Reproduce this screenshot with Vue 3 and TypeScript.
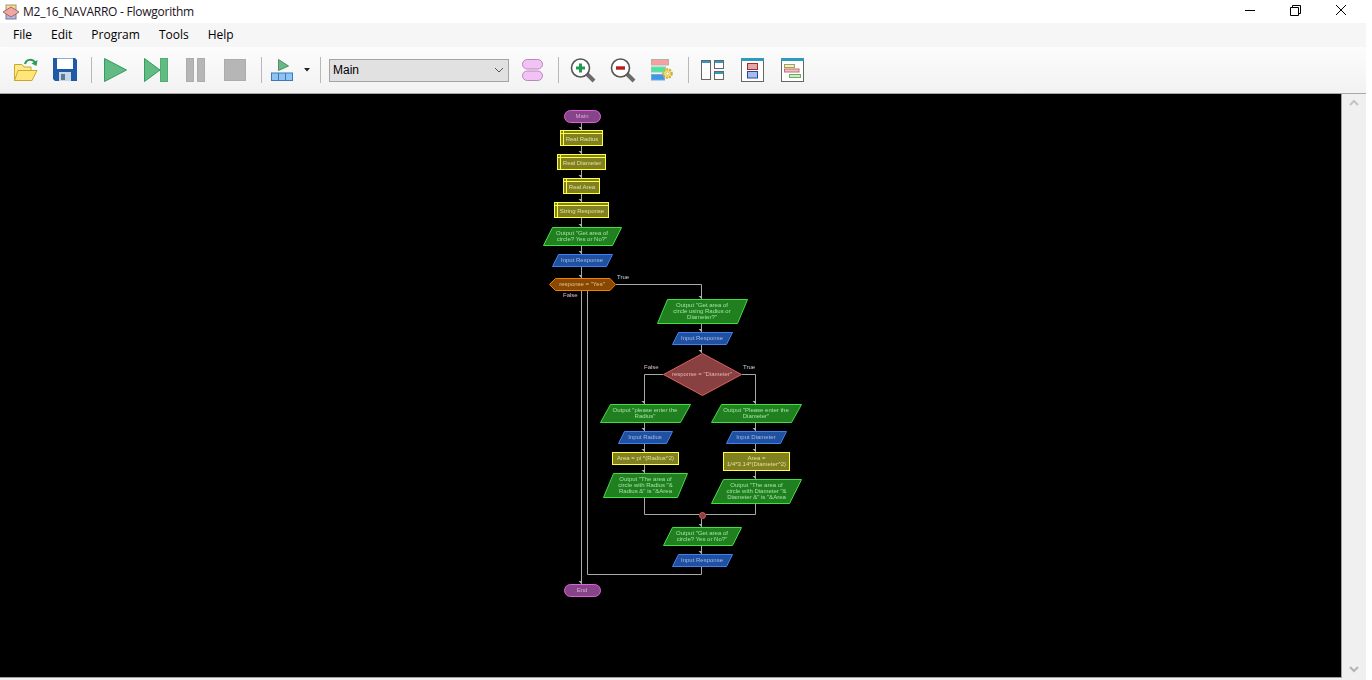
<script setup lang="ts">
type Kind = 'terminal' | 'declare' | 'output' | 'input' | 'decision' | 'diamond' | 'process'

interface FlowNode {
  kind: Kind
  points?: string
  box?: [number, number, number, number]
  inset?: boolean
  cx: number
  cy: number
  lines: string[]
}

// parallelogram from left, right, top, bottom and slant
function lean(l: number, r: number, t: number, b: number, s: number): string {
  return `${l},${b} ${l + s},${t} ${r},${t} ${r - s},${b}`
}

const nodes: FlowNode[] = [
  { kind: 'terminal', box: [564.5, 110.5, 36, 12], cx: 582, cy: 116.5, lines: ['Main'] },
  { kind: 'declare', box: [560.5, 130.5, 42, 15], inset: true, cx: 582, cy: 139.5, lines: ['Real Radius'] },
  { kind: 'declare', box: [557.5, 154.5, 48, 15], inset: true, cx: 582, cy: 163.5, lines: ['Real Diameter'] },
  { kind: 'declare', box: [563.5, 178.5, 36, 15], inset: true, cx: 582, cy: 187.5, lines: ['Real Area'] },
  { kind: 'declare', box: [554.5, 202.5, 54, 15], inset: true, cx: 582, cy: 211.5, lines: ['String Response'] },
  { kind: 'output', points: lean(543.5, 621.5, 227.5, 245.5, 9), cx: 582, cy: 236.5, lines: ['Output "Get area of', 'circle? Yes or No?"'] },
  { kind: 'input', points: lean(552.5, 612.5, 254.5, 266.5, 6), cx: 582, cy: 260.5, lines: ['Input Response'] },
  { kind: 'decision', points: '549.5,284.5 555.5,278.5 610,278.5 615.5,284.5 610,290.5 555.5,290.5', cx: 582, cy: 284.5, lines: ['response = "Yes"'] },
  { kind: 'output', points: lean(657.5, 747.5, 299.5, 323.5, 10), cx: 702, cy: 311.5, lines: ['Output "Get area of', 'circle using Radius or', 'Diameter?"'] },
  { kind: 'input', points: lean(672.5, 732.5, 332.5, 344.5, 6), cx: 702, cy: 338.5, lines: ['Input Response'] },
  { kind: 'diamond', points: '663.5,374.5 702.5,353.5 741.5,374.5 702.5,395.5', cx: 702, cy: 374.5, lines: ['response = "Diameter"'] },
  { kind: 'output', points: lean(600.5, 690.5, 404.5, 422.5, 10), cx: 645, cy: 413.5, lines: ['Output "please enter the', 'Radius"'] },
  { kind: 'output', points: lean(711.5, 801.5, 404.5, 422.5, 10), cx: 756, cy: 413.5, lines: ['Output "Please enter the', 'Diameter"'] },
  { kind: 'input', points: lean(618.5, 672.5, 431.5, 443.5, 6), cx: 645, cy: 437.5, lines: ['Input Radius'] },
  { kind: 'input', points: lean(726.5, 786.5, 431.5, 443.5, 6), cx: 756, cy: 437.5, lines: ['Input Diameter'] },
  { kind: 'process', box: [612.5, 452.5, 66, 12], cx: 645.5, cy: 458.5, lines: ['Area = pi *(Radius^2)'] },
  { kind: 'process', box: [723.5, 452.5, 66, 18], cx: 756.5, cy: 461.5, lines: ['Area =', '1/4*3.14*(Diameter^2)'] },
  { kind: 'output', points: lean(603.5, 687.5, 473.5, 497.5, 10), cx: 645.5, cy: 485.5, lines: ['Output "The area of', 'circle with Radius "&', 'Radius &" is "&Area'] },
  { kind: 'output', points: lean(711.5, 801.5, 479.5, 503.5, 12), cx: 756.5, cy: 491.5, lines: ['Output "The area of', 'circle with Diameter "&', 'Diameter &" is "&Area'] },
  { kind: 'output', points: lean(663.5, 741.5, 527.5, 545.5, 9), cx: 702, cy: 536.5, lines: ['Output "Get area of', 'circle? Yes or No?"'] },
  { kind: 'input', points: lean(672.5, 732.5, 554.5, 566.5, 6), cx: 702, cy: 560.5, lines: ['Input Response'] },
  { kind: 'terminal', box: [564.5, 584.5, 36, 12], cx: 582, cy: 590.5, lines: ['End'] },
]

const wires: string[] = [
  'M581.5 123V130', 'M581.5 146V154', 'M581.5 170V178', 'M581.5 194V202', 'M581.5 218V227',
  'M581.5 246V254', 'M581.5 267V278', 'M581.5 291V584',
  'M616 284.5H701.5V299', 'M701.5 324V332', 'M701.5 345V353',
  'M663 374.5H644.5V404', 'M742 374.5H755.5V404',
  'M644.5 423V431', 'M755.5 423V431', 'M644.5 444V452', 'M755.5 444V452', 'M644.5 465V473', 'M755.5 471V479',
  'M644.5 497V514.5H699', 'M755.5 503V514.5H706', 'M701.5 519V527', 'M701.5 546V554',
  'M701.5 567V574.5H587.5V291',
]

// tips of the wires that end in an arrow
const tips: [number, number][] = [
  [581, 130], [581, 154], [581, 178], [581, 202], [581, 227], [581, 254], [581, 278], [581, 584],
  [701, 299], [701, 332], [701, 353], [644, 404], [755, 404], [644, 431], [755, 431], [644, 452], [755, 452],
  [644, 473], [755, 479], [701, 527], [701, 554],
]

const labels = [
  { text: 'True', x: 617, y: 276.5, cls: 'lbl-true' },
  { text: 'False', x: 563, y: 295, cls: 'lbl-false' },
  { text: 'False', x: 644, y: 367, cls: 'lbl-false' },
  { text: 'True', x: 743, y: 367, cls: 'lbl-true' },
]

const menus = ['File', 'Edit', 'Program', 'Tools', 'Help']

function lineY(node: FlowNode, i: number): number {
  return node.cy - 0.6 + (i - (node.lines.length - 1) / 2) * 6
}
</script>

<template>
  <div class="window">
    <header class="titlebar">
      <svg class="app-icon" width="18" height="18" viewBox="0 0 18 18">
        <rect x="4" y="2" width="10" height="5" fill="#f0dc9c" stroke="#a89868" />
        <rect x="4" y="11" width="10" height="5" fill="#b4b8e0" stroke="#7478a8" />
        <path d="M1 9 9 4 17 9 9 14Z" fill="#f0a8a0" stroke="#a86860" />
      </svg>
      <span class="title">M2_16_NAVARRO - Flowgorithm</span>
      <div class="win-controls">
        <svg width="46" height="23" viewBox="0 0 46 23"><path d="M19 10.5H29" stroke="#000" /></svg>
        <svg width="46" height="23" viewBox="0 0 46 23" fill="none" stroke="#000">
          <path d="M18.5 7.5H26.5V15.5H18.5Z" /><path d="M20.5 7V5.5H28.5V13.5H27" />
        </svg>
        <svg width="46" height="23" viewBox="0 0 46 23"><path d="M18 5 28 15M28 5 18 15" stroke="#000" /></svg>
      </div>
    </header>

    <nav class="menubar">
      <span v-for="m in menus" :key="m" class="menu-item">{{ m }}</span>
    </nav>

    <div class="toolbar">
      <span class="btn">
        <svg width="28" height="28" viewBox="0 0 28 28">
          <path d="M3.5 24.5V8.5H11L13 11H20V24.5Z" fill="#ffe98a" stroke="#c9a92c" />
          <path d="M3.5 24.5 7 14.5H26L21 24.5Z" fill="#ffe57a" stroke="#c9a92c" />
          <path d="M14 8C15 3.5 21 2 24 6.5" fill="none" stroke="#2f9a5c" stroke-width="2" />
          <path d="M26.5 4 25.5 10 20.5 7.5Z" fill="#2f9a5c" />
        </svg>
      </span>
      <span class="btn">
        <svg width="28" height="28" viewBox="0 0 28 28">
          <path d="M2 2H24L26 4V25H4L2 23Z" fill="#1f5aa6" />
          <rect x="6" y="2.5" width="16" height="10.5" fill="#fff" />
          <rect x="8" y="16" width="12" height="9" fill="#c9d6e6" />
          <rect x="10" y="18" width="4" height="6" fill="#5f7896" />
        </svg>
      </span>
      <i class="sep" />
      <span class="btn">
        <svg width="28" height="28" viewBox="0 0 28 28"><path d="M3.5 2.5 25.5 14 3.5 25.5Z" fill="#63ba82" stroke="#2f9e5e" /></svg>
      </span>
      <span class="btn">
        <svg width="28" height="28" viewBox="0 0 28 28">
          <path d="M3.5 2.5 19 14 3.5 25.5Z" fill="#63ba82" stroke="#2f9e5e" />
          <rect x="19.5" y="2.5" width="7" height="23" fill="#63ba82" stroke="#4eae72" />
        </svg>
      </span>
      <span class="btn">
        <svg width="28" height="28" viewBox="0 0 28 28" fill="#b6b6b6" stroke="#acacac">
          <rect x="5.5" y="2.5" width="7" height="23" /><rect x="16.5" y="2.5" width="7" height="23" />
        </svg>
      </span>
      <span class="btn">
        <svg width="28" height="28" viewBox="0 0 28 28"><rect x="3.5" y="3.5" width="21" height="21" fill="#b6b6b6" stroke="#acacac" /></svg>
      </span>
      <i class="sep" />
      <span class="btn">
        <svg width="28" height="28" viewBox="0 0 28 28">
          <path d="M7.5 3.5 17.5 10 7.5 14.5Z" fill="#63ba82" stroke="#5a8a6a" />
          <rect x="0.5" y="17" width="21" height="7.5" fill="#8cc4f4" stroke="#3f78b4" />
          <path d="M7.5 17V24.5M14.5 17V24.5" stroke="#3f78b4" />
        </svg>
      </span>
      <svg class="caret" width="9" height="6" viewBox="0 0 9 6"><path d="M1 1H7L4 4.5Z" fill="#222" /></svg>
      <i class="sep" />
      <div class="combo">
        <span>Main</span>
        <svg width="10" height="6" viewBox="0 0 10 6"><path d="M1 1 5 5 9 1" fill="none" stroke="#555" /></svg>
      </div>
      <span class="btn after-combo">
        <svg width="28" height="28" viewBox="0 0 28 28" fill="#f2c2f4" stroke="#b888bc">
          <rect x="4.5" y="3.5" width="20" height="9.5" rx="4.7" /><rect x="4.5" y="15" width="20" height="9.5" rx="4.7" />
        </svg>
      </span>
      <i class="sep" />
      <span class="btn">
        <svg width="28" height="28" viewBox="0 0 28 28">
          <path d="M19 18 26 25" stroke="#6a6a6a" stroke-width="4" />
          <circle cx="12.5" cy="12" r="9" fill="#fff" stroke="#555" stroke-width="1.6" />
          <path d="M12.5 7.5V16.5M8 12H17" stroke="#1f9a50" stroke-width="3" />
        </svg>
      </span>
      <span class="btn">
        <svg width="28" height="28" viewBox="0 0 28 28">
          <path d="M19 18 26 25" stroke="#6a6a6a" stroke-width="4" />
          <circle cx="12.5" cy="12" r="9" fill="#fff" stroke="#555" stroke-width="1.6" />
          <path d="M8 12H17" stroke="#b81c1c" stroke-width="3.4" />
        </svg>
      </span>
      <span class="btn">
        <svg width="28" height="28" viewBox="0 0 28 28">
          <rect x="3.5" y="3.5" width="17" height="5.5" fill="#f8a0a0" stroke="#b8b0a8" />
          <rect x="3.5" y="11" width="14" height="5" fill="#44e8a0" stroke="#9cc8b0" />
          <rect x="3.5" y="18.5" width="13" height="5.5" fill="#3c98ec" stroke="#78a8d0" />
          <circle cx="19.5" cy="17.5" r="4.2" fill="#f8e878" stroke="#c8b040" stroke-width="2.2" stroke-dasharray="2 1" />
          <circle cx="19.5" cy="17.5" r="1.6" fill="#fff" stroke="#b8a040" stroke-width="0.6" />
        </svg>
      </span>
      <i class="sep" />
      <span class="btn">
        <svg width="28" height="28" viewBox="0 0 28 28" fill="#fff" stroke="#666">
          <rect x="3.5" y="4.5" width="9" height="19" /><rect x="16.5" y="4.5" width="9" height="8" /><rect x="16.5" y="15.5" width="9" height="8" />
          <path d="M4 6H12M17 6H25M17 17H25" stroke="#2f9ac0" stroke-width="2" />
        </svg>
      </span>
      <span class="btn">
        <svg width="28" height="28" viewBox="0 0 28 28">
          <rect x="3.5" y="2.5" width="22" height="23" fill="#fff" stroke="#666" />
          <path d="M3 3.5H26" stroke="#2f9ac0" stroke-width="3" />
          <rect x="9.5" y="7.5" width="10" height="6" fill="#e0a8a8" stroke="#a82828" />
          <rect x="9.5" y="15.5" width="10" height="6.5" fill="#a8bce8" stroke="#2848a8" />
        </svg>
      </span>
      <span class="btn">
        <svg width="28" height="28" viewBox="0 0 28 28">
          <rect x="3.5" y="2.5" width="22" height="23" fill="#fff" stroke="#666" />
          <path d="M3 3.5H26" stroke="#2f9ac0" stroke-width="3" />
          <rect x="6.5" y="8.5" width="10" height="3" fill="#f0f0c0" stroke="#a0a060" />
          <rect x="6.5" y="13" width="14.5" height="3" fill="#f4c0c0" stroke="#b87070" />
          <rect x="11.5" y="18.5" width="11" height="3" fill="#c8f0c0" stroke="#70a868" />
        </svg>
      </span>
    </div>

    <main class="workspace">
      <div class="canvas">
        <svg class="flow" width="1341" height="583" viewBox="0 94 1341 583">
          <defs>
            <filter id="soft" x="-5%" y="-20%" width="110%" height="140%">
              <feGaussianBlur stdDeviation="0.35" />
            </filter>
          </defs>
          <path v-for="(w, i) in wires" :key="'w' + i" :d="w" class="wire" />
          <path
            v-for="(t, i) in tips"
            :key="'t' + i"
            :d="`M${t[0] - 2.5} ${t[1] - 3}L${t[0] + 0.5} ${t[1]}L${t[0] + 1} ${t[1] - 3}Z`"
            class="tip"
          />
          <g v-for="(n, i) in nodes" :key="'n' + i" :class="['node', n.kind]">
            <polygon v-if="n.points" :points="n.points" />
            <rect
              v-else-if="n.box"
              :x="n.box[0]"
              :y="n.box[1]"
              :width="n.box[2]"
              :height="n.box[3]"
              :rx="n.kind === 'terminal' ? 6 : 0"
            />
            <path
              v-if="n.inset && n.box"
              :d="`M${n.box[0] + 3} ${n.box[1]}V${n.box[1] + n.box[3]}M${n.box[0]} ${n.box[1] + 3}H${n.box[0] + n.box[2]}`"
            />
            <text
              v-for="(line, j) in n.lines"
              :key="j"
              :x="n.cx"
              :y="lineY(n, j)"
              text-anchor="middle"
              dominant-baseline="central"
              filter="url(#soft)"
            >{{ line }}</text>
          </g>
          <circle cx="702.5" cy="515.5" r="3" class="merge" />
          <text
            v-for="l in labels"
            :key="l.x"
            :x="l.x"
            :y="l.y"
            :class="['lbl', l.cls]"
            dominant-baseline="central"
            filter="url(#soft)"
          >{{ l.text }}</text>
        </svg>
      </div>
      <aside class="scrollbar">
        <svg width="10" height="7" viewBox="0 0 10 7"><path d="M1 6 5 2 9 6" fill="none" stroke="#c4c4c4" stroke-width="2" /></svg>
        <svg width="10" height="7" viewBox="0 0 10 7"><path d="M1 1 5 5 9 1" fill="none" stroke="#b4b4b4" stroke-width="2" /></svg>
      </aside>
    </main>
  </div>
</template>

<style>
html,
body {
  margin: 0;
  background: #fff;
  overflow: hidden;
}
</style>

<style scoped>
.window {
  width: 1366px;
  height: 680px;
  display: flex;
  flex-direction: column;
  font-family: "Open Sans", "Liberation Sans", sans-serif;
  font-size: 12px;
  color: #000;
}

.titlebar {
  height: 23px;
  flex: none;
  display: flex;
  align-items: center;
  padding-left: 2px;
  background: #fff;
}

.app-icon {
  margin-right: 3px;
}

.title {
  font-size: 12px;
  letter-spacing: -0.25px;
  color: #1a1020;
}

.win-controls {
  margin-left: auto;
  display: flex;
  margin-right: 2px;
}

.menubar {
  height: 24px;
  flex: none;
  display: flex;
  align-items: center;
  padding: 0 0 2px 13px;
  box-sizing: border-box;
  gap: 19px;
  background: #f6f6f6;
}

.toolbar {
  height: 47px;
  flex: none;
  box-sizing: border-box;
  display: flex;
  align-items: center;
  padding-left: 5px;
  background: linear-gradient(#fcfcfc, #f2f2f2);
  border-bottom: 1px solid #a8a8a8;
  border-top-left-radius: 4px;
}

.btn {
  width: 40px;
  height: 28px;
  display: flex;
  justify-content: center;
  flex: none;
}

.after-combo {
  margin-left: 3px;
}

.sep {
  width: 1px;
  height: 26px;
  margin: 0 3px 0 6px;
  background: #b8b8b8;
  flex: none;
}

.caret {
  margin-left: -2px;
  margin-right: 2px;
  flex: none;
}

.combo {
  width: 180px;
  height: 23px;
  box-sizing: border-box;
  margin-left: 5px;
  padding: 0 4px 0 3px;
  display: flex;
  align-items: center;
  justify-content: space-between;
  background: #e1e1e1;
  border: 1px solid #a4a4a4;
  font-family: "Liberation Sans", sans-serif;
  font-size: 12px;
  flex: none;
}

.workspace {
  flex: 1;
  display: flex;
  min-height: 0;
  background: #f0f0f0;
}

.canvas {
  width: 1341px;
  height: 583px;
  background: #000;
  border-right: 1px solid #a0a0a0;
  border-bottom: 1px solid #a0a0a0;
  flex: none;
}

.flow {
  display: block;
}

.scrollbar {
  flex: 1;
  display: flex;
  flex-direction: column;
  align-items: center;
  justify-content: space-between;
  padding: 5px 0 7px;
  background: #f0f0f0;
}

.wire {
  fill: none;
  stroke: #a8a8a8;
  stroke-width: 1;
}

.tip {
  fill: #b0b0b0;
}

.node polygon,
.node rect,
.node path {
  stroke-width: 1;
}

.node text {
  font-family: "Liberation Sans", sans-serif;
  font-size: 6px;
}

.node path {
  fill: none;
}

.terminal rect {
  fill: #884488;
  stroke: #e060e0;
}

.terminal text {
  fill: #d8a8d8;
}

.declare rect,
.process rect {
  fill: #808020;
  stroke: #ffff40;
}

.declare path {
  stroke: #ffff40;
}

.declare text,
.process text {
  fill: #e0e098;
}

.output polygon {
  fill: #208020;
  stroke: #40e040;
}

.output text {
  fill: #a0e0a0;
}

.input polygon {
  fill: #2050a0;
  stroke: #4080f0;
}

.input text {
  fill: #a0b8e8;
}

.decision polygon {
  fill: #884800;
  stroke: #f08000;
}

.decision text {
  fill: #e8c090;
}

.diamond polygon {
  fill: #884040;
  stroke: #e06060;
}

.diamond text {
  fill: #e8b0b0;
}

.merge {
  fill: #884040;
  stroke: #e06060;
}

.lbl {
  font-family: "Liberation Sans", sans-serif;
  font-size: 6px;
}

.lbl-true {
  fill: #c0d8e8;
}

.lbl-false {
  fill: #e0b8cc;
}
</style>
